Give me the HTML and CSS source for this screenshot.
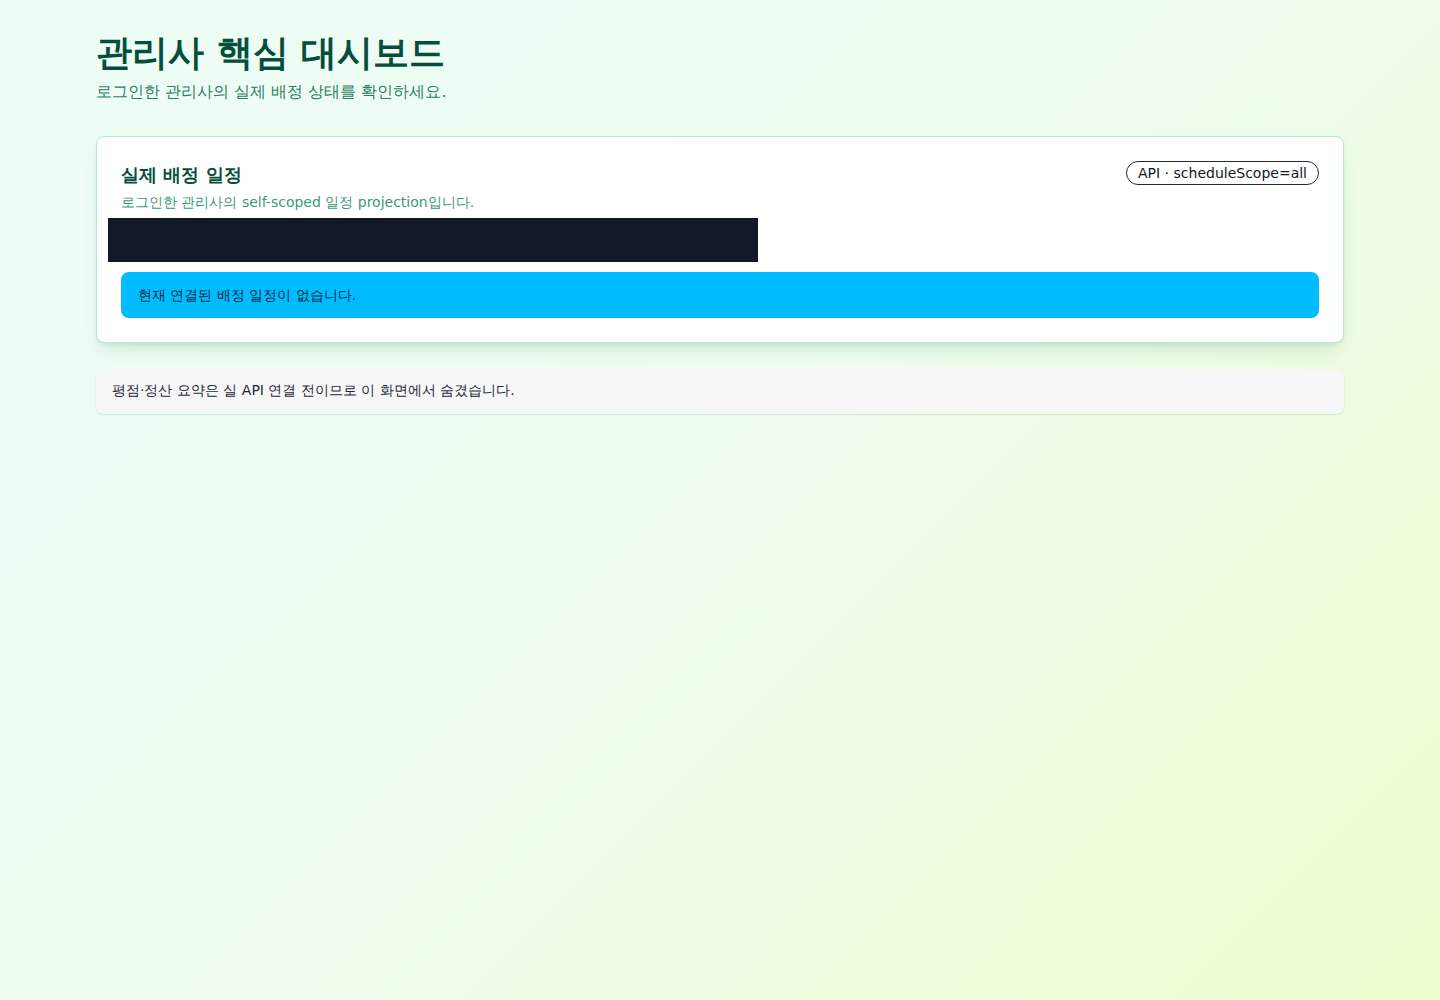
FILE: index.html
```html
<!DOCTYPE html>
<html lang="ko">
  <head>
    <meta charset="UTF-8" />
    <meta name="viewport" content="width=device-width, initial-scale=1.0" />
    <title>관리사 핵심 대시보드</title>
    <link rel="stylesheet" href="styles.css">
  </head>
  <body>
    <main class="page">
      <header class="page-header">
        <h1 class="page-title">관리사 핵심 대시보드</h1>
        <p class="page-desc">로그인한 관리사의 실제 배정 상태를 확인하세요.</p>
      </header>

      <section class="card">
        <div class="card-head">
          <div>
            <h2 class="card-title">실제 배정 일정</h2>
            <p class="card-desc">로그인한 관리사의 self-scoped 일정 projection입니다.</p>
          </div>
          <span class="badge">API · scheduleScope=all</span>
        </div>
        <div class="dark-strip"></div>
        <div class="alert-info">현재 연결된 배정 일정이 없습니다.</div>
      </section>

      <div class="notice">평점·정산 요약은 실 API 연결 전이므로 이 화면에서 숨겼습니다.</div>
    </main>
  </body>
</html>
```

FILE: styles.css
```css
html {
  min-height: 100%;
  background: linear-gradient(135deg, #ecfdf5 0%, #effcef 50%, #ecfccb 100%);
}

body {
  font-family: 'DejaVu Sans', system-ui, sans-serif;
  margin: 0;
  padding: 0;
  min-height: 100vh;
  color: #1f2937;
}

.page {
  width: 1248px;
  margin: 0 auto;
  padding: 31px 0 40px;
  box-sizing: border-box;
}

.page-header {
  margin-bottom: 33px;
}

.page-title {
  margin: 0;
  font-size: 36px;
  line-height: 44px;
  font-weight: 700;
  color: #064e3b;
}

.page-desc {
  margin: 6px 0 0;
  font-size: 16px;
  line-height: 22px;
  color: #2f7d62;
}

.card {
  background: #fff;
  border: 1px solid #b4ead4;
  border-radius: 8px;
  box-shadow: 0 10px 18px -6px rgba(16, 110, 70, 0.18), 0 2px 4px rgba(16, 110, 70, 0.06);
  padding: 23px 24px 24px;
}

.card-head {
  display: flex;
  justify-content: space-between;
  align-items: flex-start;
}

.card-title {
  margin: 1px 0 0;
  font-size: 18px;
  line-height: 28px;
  font-weight: 700;
  color: #064e3b;
}

.card-desc {
  margin: 3px 0 0;
  font-size: 14px;
  line-height: 20px;
  color: #3a9a78;
}

.badge {
  display: inline-block;
  margin-top: 1px;
  border: 1px solid #1f2937;
  border-radius: 999px;
  padding: 0 11px;
  font-size: 14px;
  line-height: 22px;
  color: #111827;
  white-space: nowrap;
}

.dark-strip {
  width: 650px;
  height: 44px;
  margin: 6px 0 0 -13px;
  background: #111827;
}

.alert-info {
  margin-top: 10px;
  background: #00bbff;
  color: #063044;
  border-radius: 8px;
  padding: 0 17px;
  height: 46px;
  line-height: 46px;
  font-size: 14px;
}

.notice {
  margin-top: 26px;
  background: #f7f7f7;
  border-radius: 8px;
  box-shadow: 0 1px 2px rgba(0, 0, 0, 0.1);
  padding: 0 16px 2px;
  height: 43px;
  line-height: 43px;
  font-size: 14px;
  color: #1f2937;
}
```
